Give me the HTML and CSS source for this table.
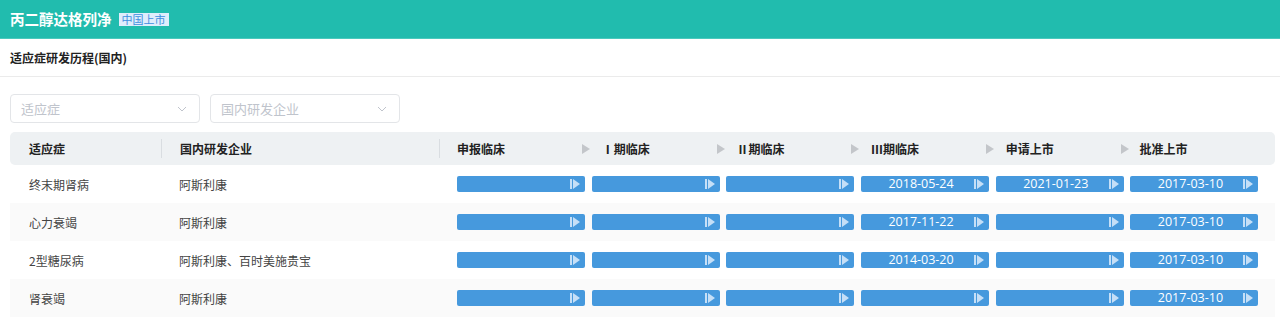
FILE: index.html
```html
<!DOCTYPE html>
<html lang="zh">
<head>
<meta charset="utf-8">
<link rel="stylesheet" href="styles.css">
</head>
<body>
<div class="topbar">
  <span class="title">丙二醇达格列净</span>
  <span class="tag">中国上市</span>
</div>
<div class="section-head">适应症研发历程(国内)</div>
<div class="filters">
  <div class="select"><span>适应症</span><svg width="10" height="6" viewBox="0 0 10 6"><path d="M1 1l4 4 4-4" fill="none" stroke="#c0c4cc" stroke-width="1"/></svg></div>
  <div class="select"><span>国内研发企业</span><svg width="10" height="6" viewBox="0 0 10 6"><path d="M1 1l4 4 4-4" fill="none" stroke="#c0c4cc" stroke-width="1"/></svg></div>
</div>
<div class="table">
  <div class="thead">
    <div class="c1"><span>适应症</span></div>
    <div class="c2"><span>国内研发企业</span></div>
    <div class="stages">
      <div class="sh"><span>申报临床</span><i class="tri"></i></div>
      <div class="sh"><span>Ⅰ期临床</span><i class="tri"></i></div>
      <div class="sh"><span>Ⅱ期临床</span><i class="tri"></i></div>
      <div class="sh"><span>Ⅲ期临床</span><i class="tri"></i></div>
      <div class="sh"><span>申请上市</span><i class="tri"></i></div>
      <div class="sh"><span>批准上市</span></div>
    </div>
  </div>
  <div class="row">
    <div class="c1">终末期肾病</div>
    <div class="c2">阿斯利康</div>
    <div class="stages">
      <div class="bar"><i class="ic"></i></div>
      <div class="bar"><i class="ic"></i></div>
      <div class="bar"><i class="ic"></i></div>
      <div class="bar">2018-05-24<i class="ic"></i></div>
      <div class="bar">2021-01-23<i class="ic"></i></div>
      <div class="bar">2017-03-10<i class="ic"></i></div>
    </div>
  </div>
  <div class="row alt">
    <div class="c1">心力衰竭</div>
    <div class="c2">阿斯利康</div>
    <div class="stages">
      <div class="bar"><i class="ic"></i></div>
      <div class="bar"><i class="ic"></i></div>
      <div class="bar"><i class="ic"></i></div>
      <div class="bar">2017-11-22<i class="ic"></i></div>
      <div class="bar"><i class="ic"></i></div>
      <div class="bar">2017-03-10<i class="ic"></i></div>
    </div>
  </div>
  <div class="row">
    <div class="c1">2型糖尿病</div>
    <div class="c2">阿斯利康、百时美施贵宝</div>
    <div class="stages">
      <div class="bar"><i class="ic"></i></div>
      <div class="bar"><i class="ic"></i></div>
      <div class="bar"><i class="ic"></i></div>
      <div class="bar">2014-03-20<i class="ic"></i></div>
      <div class="bar"><i class="ic"></i></div>
      <div class="bar">2017-03-10<i class="ic"></i></div>
    </div>
  </div>
  <div class="row alt">
    <div class="c1">肾衰竭</div>
    <div class="c2">阿斯利康</div>
    <div class="stages">
      <div class="bar"><i class="ic"></i></div>
      <div class="bar"><i class="ic"></i></div>
      <div class="bar"><i class="ic"></i></div>
      <div class="bar"><i class="ic"></i></div>
      <div class="bar"><i class="ic"></i></div>
      <div class="bar">2017-03-10<i class="ic"></i></div>
    </div>
  </div>
</div>
</body>
</html>
```
FILE: styles.css
```css
* { box-sizing: border-box; }
html, body { margin: 0; padding: 0; background: #fff; }
body {
  font-family: "Microsoft YaHei", "Noto Sans CJK SC", "Noto Sans", sans-serif;
  color: #333;
  font-size: 12px;
}
.topbar {
  height: 39px;
  background: #21bcae;
  border-bottom: 1px solid #4ac9bd;
  display: flex;
  align-items: center;
  padding: 0 10px;
  gap: 7px;
}
.title {
  color: #fff;
  font-size: 14.5px;
  font-weight: bold;
  line-height: 20px;
}
.tag {
  background: #dfedfc;
  color: #3d8fe0;
  font-size: 11px;
  line-height: 13px;
  padding: 0 3px;
}
.section-head {
  height: 38px;
  display: flex;
  align-items: center;
  padding: 0 10px;
  font-weight: bold;
  font-size: 12px;
  color: #222;
  border-bottom: 1px solid #ebebeb;
}
.filters {
  display: flex;
  gap: 10px;
  padding: 17px 10px 9px;
}
.select {
  width: 190px;
  height: 29px;
  border: 1px solid #e3e5e8;
  border-radius: 4px;
  display: flex;
  align-items: center;
  justify-content: space-between;
  padding: 0 10px;
  color: #c0c4cc;
  font-size: 13px;
}
.select svg { margin-right: 2px; }
.table { margin: 0 5px 0 10px; }
.thead {
  display: flex;
  height: 33px;
  align-items: center;
  background: #eef1f3;
  border-radius: 5px;
  font-weight: bold;
  color: #222;
}
.c1 { width: 151px; padding-left: 19px; flex: none; }
.c2 { width: 278px; padding-left: 18px; flex: none; }
.thead .c1, .thead .c2 { height: 19px; display: flex; align-items: center; }
.thead .c2, .thead .stages { border-left: 1px solid #d9dde1; }
.thead .stages { height: 19px; align-items: center; padding-left: 17px; }
.stages {
  display: flex;
  flex: 1;
  padding-left: 18px;
  padding-right: 10px;
}
.sh {
  width: 128px;
  margin-right: 6.7px;
  flex: none;
  display: flex;
  align-items: center;
  justify-content: space-between;
  padding-right: 0;
  padding-left: 10px;
}
.sh:first-child { padding-left: 0; }
.sh:last-child { padding-left: 9px; }
.tri {
  width: 0; height: 0;
  margin-right: -5px;
  border-left: 8px solid #c3c6ca;
  border-top: 5px solid transparent;
  border-bottom: 5px solid transparent;
}
.row {
  display: flex;
  height: 38px;
  align-items: center;
  color: #444;
}
.row.alt { background: #fafafa; }
.bar {
  width: 128px;
  margin-right: 6.7px;
  height: 16px;
  background: #4699dd;
  border-radius: 2px;
  color: #fff;
  font-family: "Open Sans", "Noto Sans CJK SC", sans-serif;
  font-size: 12.5px;
  line-height: 16px;
  text-align: center;
  padding-right: 8px;
  position: relative;
  flex: none;
}
.ic {
  position: absolute;
  right: 5px;
  top: 3px;
  width: 10px;
  height: 10px;
  border-left: 2px solid #c5dff7;
}
.ic::after {
  content: "";
  position: absolute;
  left: 1px;
  top: 0;
  width: 0; height: 0;
  border-left: 7px solid #c5dff7;
  border-top: 5px solid transparent;
  border-bottom: 5px solid transparent;
}
```
